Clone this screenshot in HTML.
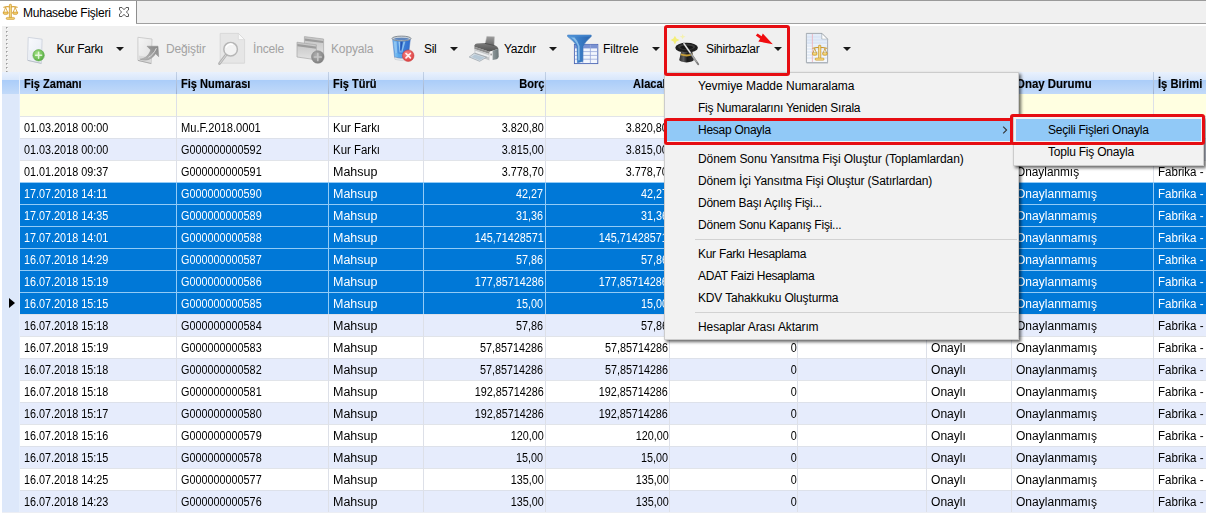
<!DOCTYPE html>
<html lang="tr"><head><meta charset="utf-8"><title>Muhasebe Fişleri</title>
<style>

html,body{margin:0;padding:0}
body{width:1206px;height:515px;overflow:hidden;background:#fff;position:relative;
 font-family:"Liberation Sans",sans-serif;font-size:12px;color:#000;}
div,span,svg{position:absolute;box-sizing:border-box}
span{white-space:pre;line-height:14px;height:14px}
.topline{left:0;top:0;width:1206px;height:1px;background:#9a9a9a}
.tabstrip{left:0;top:1px;width:1206px;height:22px;background:#f0f0f0}
.tabline{left:136px;top:23px;width:1070px;height:1px;background:#a0a0a0}
.tab{left:0;top:1px;width:136px;height:25px;background:#fff}
.tabedge{left:136px;top:1px;width:1px;height:23px;background:#8e8e8e}
.tabtxt{left:23px;top:5.6px;font-size:12px;letter-spacing:-0.23px;color:#000}
.toolbar{left:0;top:26px;width:1206px;height:46px;background:#f0f0f0}
.lstrip{left:0;top:26px;width:2px;height:489px;background:#fff}
.grip{left:6px;top:27px;width:1px;height:46px;
 background:repeating-linear-gradient(to bottom,#9c9c9c 0,#9c9c9c 1px,#c2c2c2 1px,#c2c2c2 2px,transparent 2px,transparent 4px)}
.grip2{left:7px;top:27px;width:1px;height:46px;
 background:repeating-linear-gradient(to bottom,#c2c2c2 0,#c2c2c2 1px,#fff 1px,#fff 2px,transparent 2px,transparent 4px)}
.tb{top:41.6px;font-size:12px;letter-spacing:-0.3px;color:#000}
.tbd{top:41.6px;font-size:12px;letter-spacing:-0.15px;color:#a2a2a2}
.arr{width:0;height:0;border-left:4px solid transparent;border-right:4px solid transparent;border-top:4px solid #1a1a1a;top:47px}
/* grid */
.hdr{left:2px;top:72px;width:1204px;height:22px;
 background:linear-gradient(to bottom,#e9f1fd 0,#d9e7fb 7.5px,#abcdf9 8.5px,#c2daf9 22px)}
.hdr span{top:4.7px;font-weight:bold;font-size:12px;color:#000;-webkit-text-stroke:.15px #000;transform:scaleX(.92);transform-origin:0 50%}
.hdr span.r{transform-origin:100% 50%}
.hv{top:72px;width:1px;height:22px;background:linear-gradient(to bottom,#c4d2e6,#9db2d2)}
.ind{left:2px;top:94px;width:18px;height:418px;background:#dde8fa}
.indh{left:2px;top:72px;width:18px;height:22px;background:linear-gradient(to bottom,#e9f1fd 0,#d9e7fb 7.5px,#abcdf9 8.5px,#c2daf9 22px)}
.frow{left:20px;top:94px;width:1186px;height:22px;background:#ffffe1}
.row{left:20px;width:1186px;height:22px;border-top:1px solid #e1e4e9}
.row.n{background:#fff}
.row.a{background:#e6ecfc;border-top-color:#dde1ea}
.row.s{background:#0078d7;color:#fff;border-top-color:#93cbf6}
.row span{top:3.6px;font-size:12px}
.vl{top:94px;width:1px;height:418px;background:#dde0e8}
.vls{width:1px;background:#93cbf6}
.cur{left:9px;top:298px;width:0;height:0;border-top:5.5px solid transparent;border-bottom:5.5px solid transparent;border-left:6px solid #000}
/* menus */
.menu{left:664px;top:72px;width:355px;height:268px;background:#f2f2f2;border:1px solid #cccccc;
 box-shadow:2px 2px 3px rgba(0,0,0,.6)}
.menu span{left:33px;font-size:12px;letter-spacing:-0.08px;color:#000}
.sep{left:30px;width:322px;height:1px;background:#d2d2d2}
.hl{background:#91c9f7}
.sub{left:1013px;top:116px;width:191px;height:50px;background:#f2f2f2;border:1px solid #cccccc;
 box-shadow:2px 2px 3px rgba(0,0,0,.6)}
.sub span{left:34px;font-size:12px;letter-spacing:-0.22px;color:#000}
.red{border:3px solid #e60d12;border-radius:3px}

</style></head><body>
<div class="tabstrip"></div><div class="tab"></div><div class="tabedge"></div><div class="tabline"></div><div class="topline"></div>
<div class="toolbar"></div><div class="lstrip"></div><div class="grip"></div><div class="grip2"></div>
<svg style="left:2px;top:3px" width="18" height="18" viewBox="2 3 18 18">
<g fill="none" stroke="#d9a53a" stroke-linecap="round">
<path d="M3.8 7.2 Q7 6.2 10.4 7 Q14 6.2 17.2 7.2" stroke-width="1.2"/>
<path d="M5.6 7.5 L3.6 12.4 M5.6 7.5 L7.7 12.4" stroke-width="0.9"/>
<path d="M15.2 7.5 L13.1 12.4 M15.2 7.5 L17.3 12.4" stroke-width="0.9"/>
</g>
<rect x="9.3" y="4.2" width="2.2" height="14" rx="0.8" fill="#e4b548" stroke="#c8922a" stroke-width="0.5"/>
<rect x="10" y="5" width="0.8" height="12.5" fill="#f8e08c"/>
<path d="M3.2 12 H8.2 V13.2 Q8.2 14.6 5.7 14.6 Q3.2 14.6 3.2 13.2 Z" fill="#e3b040" stroke="#c8922a" stroke-width="0.5"/>
<path d="M12.7 12 H17.7 V13.2 Q17.7 14.6 15.2 14.6 Q12.7 14.6 12.7 13.2 Z" fill="#e3b040" stroke="#c8922a" stroke-width="0.5"/>
<rect x="4" y="12.7" width="3.4" height="0.8" fill="#f8e08c"/><rect x="13.5" y="12.7" width="3.4" height="0.8" fill="#f8e08c"/>
<rect x="6.2" y="17.4" width="8.4" height="2" rx="0.9" fill="#e4b548" stroke="#c8922a" stroke-width="0.5"/>
<rect x="7" y="17.9" width="6.8" height="0.7" fill="#f8e08c"/>
</svg>
<span class="tabtxt">Muhasebe Fişleri</span>
<svg style="left:117px;top:5px" width="14" height="14" viewBox="117 5 14 14">
<path d="M119.5 7.5 H122 L124 9.7 L126 7.5 H128.5 V10 L126.3 12 L128.5 14 V16.5 H126 L124 14.3 L122 16.5 H119.5 V14 L121.7 12 L119.5 10 Z"
 fill="#fff" stroke="#5a5a5a" stroke-width="1"/></svg>
<svg style="left:24px;top:33px" width="26" height="34" viewBox="24 33 26 34"><defs><linearGradient id="nd1" x1="0" y1="0" x2="1" y2="1"><stop offset="0" stop-color="#f9fafd"/><stop offset="1" stop-color="#e6ebf3"/></linearGradient>
<radialGradient id="nd2" cx=".4" cy=".35" r=".8"><stop offset="0" stop-color="#a6e488"/><stop offset="1" stop-color="#47a234"/></radialGradient></defs>
<path d="M28.2 37.4 L42.1 39.2 L41.4 63.4 L27.6 60.3 Z" fill="url(#nd1)" stroke="#cdd3dc" stroke-width="0.9"/>
<path d="M28.8 50 L41.3 52 L41 62.6 L28.3 59.8 Z" fill="#e9edf4" opacity=".9"/>
<path d="M27.8 60.4 L41.3 63.4" stroke="#b4bac4" stroke-width="0.8"/>
<circle cx="38.6" cy="55.3" r="5.7" fill="url(#nd2)" stroke="#5aa847" stroke-width="0.6"/>
<path d="M38.6 52.3 V58.3 M35.6 55.3 H41.6" stroke="#f0fbea" stroke-width="1.5" stroke-linecap="round" opacity=".88"/>
</svg>
<span class="tb" style="left:56.5px">Kur Farkı</span><div class="arr" style="left:116px"></div>
<svg style="left:134px;top:33px" width="30" height="34" viewBox="134 33 30 34"><defs><linearGradient id="ed1" x1="0" y1="0" x2="1" y2="1"><stop offset="0" stop-color="#f5f5f5"/><stop offset="1" stop-color="#dfdfdf"/></linearGradient>
<linearGradient id="ed2" x1="0" y1="1" x2="1" y2="0"><stop offset="0" stop-color="#bdbdbd"/><stop offset="1" stop-color="#858585"/></linearGradient></defs>
<path d="M137.9 37.3 L152 39 L151.2 63.5 L137.9 60.4 Z" fill="url(#ed1)" stroke="#cacaca" stroke-width="0.9"/>
<path d="M138.6 55.4 L150.8 57.6 L150.6 62.8 L138.6 60 Z" fill="#dadada"/>
<path d="M138 60.4 L151.2 63.5" stroke="#a8a8a8" stroke-width="0.9"/>
<path d="M147 46.2 L158 46.2 L158.7 56.7 L155.5 53.7 C152.4 58.8 146.8 61.6 140.2 59.2 C145.4 58.4 149 55.2 150.7 49.9 Z" fill="url(#ed2)" stroke="#8e8e8e" stroke-width="0.5"/>
<path d="M156.4 48.2 C154.4 52.6 151.6 55.6 148.4 57.4" fill="none" stroke="#dedede" stroke-width="1"/>
</svg>
<span class="tbd" style="left:166px">Değiştir</span>
<svg style="left:216px;top:31px" width="32" height="36" viewBox="216 31 32 36">
<path d="M220.2 33.4 H238.4 L244.6 39.6 V63.2 H220.2 Z" fill="#e6e6e6" stroke="#d4d4d4" stroke-width="0.8"/>
<path d="M238.4 33.4 V39.6 H244.6 Z" fill="#fafafa" stroke="#d4d4d4" stroke-width="0.6"/>
<path d="M226.2 54.6 L219.4 63.6" stroke="#b2b2b2" stroke-width="2.6" stroke-linecap="round"/>
<path d="M226 55 L220 63" stroke="#dcdcdc" stroke-width="0.9" stroke-linecap="round"/>
<circle cx="230.6" cy="49.2" r="6.8" fill="#f3f3f3" stroke="#b6b6b6" stroke-width="1.5"/>
<path d="M226 47.5 A5 5 0 0 1 233 44.6" stroke="#fff" stroke-width="1.6" fill="none"/>
</svg>
<span class="tbd" style="left:253px">İncele</span>
<svg style="left:294px;top:33px" width="34" height="34" viewBox="294 33 34 34"><defs><linearGradient id="cp1" x1="0" y1="0" x2="0" y2="1"><stop offset="0" stop-color="#c4c4c4"/><stop offset="1" stop-color="#e2e2e2"/></linearGradient>
<radialGradient id="cp2" cx=".4" cy=".35" r=".8"><stop offset="0" stop-color="#b0b0b0"/><stop offset="1" stop-color="#757575"/></radialGradient></defs>
<path d="M304.4 36.6 L323.6 39 L323.6 57 L304.4 54.6 Z" fill="url(#cp1)" stroke="#a8a8a8" stroke-width="0.7"/>
<path d="M304.8 38.6 L323.2 40.9 V43 L304.8 40.8 Z" fill="#9c9c9c"/>
<path d="M297 42.2 L316.4 44.8 L316.4 59.8 L297 57 Z" fill="url(#cp1)" stroke="#a8a8a8" stroke-width="0.7"/>
<path d="M297.4 44 L316 46.6 V48.8 L297.4 46.3 Z" fill="#9c9c9c"/>
<circle cx="317.8" cy="57" r="6.3" fill="url(#cp2)" stroke="#808080" stroke-width="0.5"/>
<path d="M317.8 53.6 V60.4 M314.4 57 H321.2" stroke="#cdcdcd" stroke-width="1.7" stroke-linecap="round" opacity=".85"/>
</svg>
<span class="tbd" style="left:331px">Kopyala</span>
<svg style="left:389px;top:33px" width="28" height="32" viewBox="389 33 28 32"><defs><linearGradient id="tr1" x1="0" y1="0" x2="1" y2="0"><stop offset="0" stop-color="#74b8ee"/><stop offset=".4" stop-color="#4488dc"/><stop offset="1" stop-color="#2f6ccc"/></linearGradient>
<radialGradient id="tr2" cx=".4" cy=".35" r=".8"><stop offset="0" stop-color="#f68686"/><stop offset="1" stop-color="#d83232"/></radialGradient></defs>
<path d="M392.6 38.8 L394.6 57.6 Q401.4 59.6 408.2 57.6 L410.4 38.8 Z" fill="url(#tr1)" stroke="#4a78c0" stroke-width="0.5"/>
<path d="M393.8 41.4 L395.4 56.6 L397.6 57 L396.6 41.4 Z" fill="#a6d6f8" opacity=".65"/>
<path d="M398.4 41.4 L399.6 52.4 L400.6 52.4 L400.2 41.4 Z" fill="#a8d6f6" opacity=".85"/>
<path d="M400.5 41.4 L400.2 50.6 L401.3 50.6 L402.6 41.4 Z" fill="#2555b4"/>
<path d="M403.4 41.4 L401.2 52.6 L402.3 52.6 L405.4 41.4 Z" fill="#9ccff4" opacity=".8"/>
<path d="M395.4 52.8 Q401.4 55 407.6 52.8 L407.2 56.8 Q401.4 58.8 395.8 56.8 Z" fill="#62b4f0" opacity=".7"/>
<path d="M394.6 57.2 Q401.4 59.8 408.2 57.2 L408 59.4 Q401.4 61.6 394.9 59.4 Z" fill="#e4e8ec" stroke="#b0b8c0" stroke-width="0.4"/>
<ellipse cx="401.5" cy="38.5" rx="9.5" ry="2.4" fill="#c9d1d9" stroke="#878f96" stroke-width="1"/>
<ellipse cx="401.5" cy="38.9" rx="7.5" ry="1.2" fill="#5f86bd"/>
<circle cx="408.2" cy="55.7" r="5.8" fill="url(#tr2)" stroke="#c23a3a" stroke-width="0.5"/>
<path d="M406 53.5 L410.4 57.9 M410.4 53.5 L406 57.9" stroke="#fff2f2" stroke-width="1.7" stroke-linecap="round"/>
</svg>
<span class="tb" style="left:424px">Sil</span><div class="arr" style="left:450px"></div>
<svg style="left:466px;top:33px" width="36" height="32" viewBox="466 33 36 32"><defs><linearGradient id="pr1" x1="0" y1="0" x2="0" y2="1"><stop offset="0" stop-color="#9c9c9c"/><stop offset="1" stop-color="#666"/></linearGradient>
<linearGradient id="pr2" x1="0" y1="0" x2="0" y2="1"><stop offset="0" stop-color="#7c7c7c"/><stop offset="1" stop-color="#505050"/></linearGradient>
<linearGradient id="pr3" x1="0" y1="0" x2="1" y2="0"><stop offset="0" stop-color="#8e989a"/><stop offset="1" stop-color="#697577"/></linearGradient></defs>
<path d="M486.8 36.4 L494.4 36.8 L494 45.8 L485 44.4 Z" fill="url(#pr1)" stroke="#b4b4b4" stroke-width="0.5"/>
<path d="M474.6 45.2 Q475 43.8 477 43.5 L485 42.9 L494.5 45 Q498 46.4 498.4 48.8 L489.6 51.8 L474.4 46.8 Z" fill="url(#pr2)"/>
<path d="M485 43.4 L494 45.4" stroke="#4c4c4c" stroke-width="0.9"/>
<path d="M474.4 46.8 L489.6 51.8 L489.6 54 L474.4 49 Z" fill="#8e8e8e"/>
<path d="M474.4 49 L489.6 54 L489.6 60.4 L474.8 55 Z" fill="#c4c6c8"/>
<path d="M475.4 50.8 L488.8 55.2 L488.8 57.2 L475.4 52.8 Z" fill="#eceeef"/>
<path d="M489.6 51.8 L492.6 50.8 L492.6 60 L489.6 60.6 Z" fill="#f5f5f5"/>
<path d="M492.6 50.8 L498.4 48.8 L498.7 56.4 Q498.5 58.6 496.6 59.2 L492.6 60 Z" fill="url(#pr3)"/>
<rect x="490.6" y="53.6" width="1" height="1.8" fill="#666"/>
<path d="M474.2 53.2 L486.6 57.2 L479.6 61.3 L469.2 57 Z" fill="#d5dde4" stroke="#8c969e" stroke-width="0.6"/>
<path d="M474.8 54.6 L484.4 57.6 L479.6 60.2 L471.6 57 Z" fill="#b6c8d6"/>
</svg>
<span class="tb" style="left:504px">Yazdır</span><div class="arr" style="left:549px"></div>
<svg style="left:564px;top:32px" width="38" height="34" viewBox="564 32 38 34"><defs><linearGradient id="fl1" x1="0" y1="0" x2="1" y2="0"><stop offset="0" stop-color="#5a9edc"/><stop offset=".5" stop-color="#3a7cc6"/><stop offset="1" stop-color="#2a64ae"/></linearGradient></defs>
<rect x="574.4" y="44.4" width="23.4" height="19.2" fill="#f2f6fd" stroke="#4a66b4" stroke-width="0.9"/>
<rect x="574.8" y="44.8" width="22.6" height="3.6" fill="#7a92d2"/>
<path d="M574.8 51.6 H597.4 M574.8 55.4 H597.4 M574.8 59.2 H597.4" stroke="#8c9ed4" stroke-width="0.7" fill="none"/>
<path d="M582.8 44.8 V63.2 M590.4 44.8 V63.2" stroke="#98a8da" stroke-width="0.8" fill="none"/>
<path d="M567.6 35 H591.2 V36.6 Q585 42 583 46.4 L582.8 61.4 L577.4 62.8 L577 46.4 Q574.6 41.6 567.6 36.6 Z" fill="url(#fl1)" stroke="#2f6eb8" stroke-width="0.5"/>
<path d="M568 35.3 H590.8 V36.4 H568 Z" fill="#4d8fd4"/>
<path d="M571 37.4 Q576 40.8 577.8 46 L578.2 60.6 L579.8 60.2 L579.6 46 Q578 41 574.6 37.4 Z" fill="#a6d4f4" opacity=".7"/>
</svg>
<span class="tb" style="left:603px;letter-spacing:-.04px">Filtrele</span><div class="arr" style="left:652px"></div>
<svg style="left:668px;top:32px" width="34" height="36" viewBox="668 32 34 36"><defs><linearGradient id="ht1" x1="0" y1="0" x2="1" y2="0"><stop offset="0" stop-color="#2e2e2e"/><stop offset=".3" stop-color="#5c5c5c"/><stop offset=".55" stop-color="#1a1a1a"/><stop offset="1" stop-color="#303030"/></linearGradient>
<filter id="hb" x="-30%" y="-30%" width="160%" height="160%"><feGaussianBlur stdDeviation="0.5"/></filter></defs>
<g filter="url(#hb)" opacity=".8"><path d="M674.9 35.8 L676.4 38.6 L679.6 40.1 L676.4 41.6 L674.9 44.6 L673.4 41.6 L670.6 40.1 L673.4 38.6 Z" fill="#f5ee5c"/>
<path d="M682.7 34 L683.5 36 L685.6 36.6 L683.5 37.4 L682.7 39.4 L681.9 37.4 L679.8 36.6 L681.9 36 Z" fill="#f7f290" opacity=".85"/></g>
<ellipse cx="686.6" cy="47.7" rx="11.3" ry="4.9" fill="#1e1e1e"/>
<ellipse cx="686.6" cy="46.9" rx="8.6" ry="2.9" fill="#3a3a3a"/>
<ellipse cx="686.6" cy="47.4" rx="6.4" ry="1.9" fill="#161616"/>
<path d="M681.2 51.2 Q686.6 53.4 692.2 51.2 L693.8 60 Q693.4 61.8 686.5 62.4 Q679.6 61.8 679.2 60 Z" fill="url(#ht1)"/>
<path d="M681 53.4 Q686.6 55.6 692.5 53.4 L692.8 55.3 Q686.6 57.5 680.7 55.3 Z" fill="#c8a038"/>
<path d="M683.9 43.6 L698.2 64.2" stroke="#7c7c7c" stroke-width="1.9" stroke-linecap="round"/>
<path d="M683.9 43.6 L690.2 52.6" stroke="#ececec" stroke-width="1.1" stroke-linecap="round"/>
<path d="M691.6 54.6 L696.4 61.6" stroke="#a8a8a8" stroke-width="1.1" stroke-linecap="round"/>
</svg>
<span class="tb" style="left:706px">Sihirbazlar</span><div class="arr" style="left:774px"></div>
<svg style="left:803px;top:30px" width="28" height="36" viewBox="803 30 28 36">
<path d="M806.4 33.4 H821.8 L827.6 39.2 V62.6 H806.4 Z" fill="#f4f7fc" stroke="#8e979f" stroke-width="0.8"/>
<path d="M806.9 33.9 H821.6 L827.1 39.4 V44.6 H806.9 Z" fill="#e3ecf8"/>
<path d="M821.8 33.4 V39.2 H827.6 Z" fill="#fff" stroke="#8e979f" stroke-width="0.6"/>
<path d="M807 37 H821 M807 40 H827 M807 43 H827 M807 46 H827 M807 49 H827 M807 52 H827 M807 55 H827 M807 58 H827" stroke="#d2e0f3" stroke-width="0.9"/>
<path d="M812.4 34 V62" stroke="#ecb6c0" stroke-width="0.9"/>
<path d="M806.6 63.3 H828" stroke="#c2c8ce" stroke-width="0.8"/>
<g fill="none" stroke="#c8962e" stroke-linecap="round"><path d="M812.8 48.2 Q816.4 47 819.6 47.8 Q823 47 826.8 48.2" stroke-width="1.1"/>
<path d="M814.7 48.6 L812.8 53.2 M814.7 48.6 L816.6 53.2 M824.9 48.6 L823 53.2 M824.9 48.6 L826.8 53.2" stroke-width="0.8"/></g>
<rect x="818.5" y="45.1" width="2.4" height="13.6" rx="0.8" fill="#ecc354" stroke="#bf8c28" stroke-width="0.5"/>
<rect x="819.3" y="46" width="0.8" height="12" fill="#fbe9a2"/>
<path d="M812.3 52.8 H817.1 L816.7 55 Q814.7 55.8 812.7 55 Z" fill="#ecc354" stroke="#bf8c28" stroke-width="0.5"/>
<path d="M822.5 52.8 H827.3 L826.9 55 Q824.9 55.8 822.9 55 Z" fill="#ecc354" stroke="#bf8c28" stroke-width="0.5"/>
<rect x="813.2" y="53.4" width="3" height="0.8" fill="#fbe9a2"/><rect x="823.4" y="53.4" width="3" height="0.8" fill="#fbe9a2"/>
<rect x="815.1" y="58.1" width="9" height="2.1" rx="0.9" fill="#ecc354" stroke="#bf8c28" stroke-width="0.5"/>
<rect x="816" y="58.7" width="7.2" height="0.7" fill="#fbe9a2"/>
</svg>
<div class="arr" style="left:843px"></div>
<div class="hdr">
<span style="left:22px">Fiş Zamanı</span>
<span style="left:179px">Fiş Numarası</span>
<span style="left:331px">Fiş Türü</span>
<span class="r" style="right:662px">Borç</span>
<span class="r" style="right:537px">Alacak</span>
<span class="r" style="right:410px">Döviz</span>
<span style="left:800px">Açıklama</span>
<span style="left:929px">Durum</span>
<span style="left:1014px;transform:scaleX(.955)">Onay Durumu</span>
<span style="left:1156px;transform:scaleX(.935)">İş Birimi</span>
</div>
<div class="hv" style="left:19px"></div>
<div class="hv" style="left:176px"></div>
<div class="hv" style="left:328px"></div>
<div class="hv" style="left:423px"></div>
<div class="hv" style="left:545px"></div>
<div class="hv" style="left:669px"></div>
<div class="hv" style="left:797px"></div>
<div class="hv" style="left:926px"></div>
<div class="hv" style="left:1011px"></div>
<div class="hv" style="left:1153px"></div>
<div class="indh"></div><div class="ind"></div><div class="frow"></div><div style="left:19px;top:72px;width:1px;height:440px;background:#e6effc"></div>
<div class="row n" style="top:116px">
<span style="left:4.399999999999999px;transform:scaleX(0.902);transform-origin:0 50%">01.03.2018 00:00</span>
<span style="left:161.2px;transform:scaleX(0.927);transform-origin:0 50%">Mu.F.2018.0001</span>
<span style="left:313.2px;transform:scaleX(0.953);transform-origin:0 50%">Kur Farkı</span>
<span style="right:662.60px;transform:scaleX(0.9);transform-origin:100% 50%">3.820,80</span>
<span style="right:537.80px;transform:scaleX(0.9);transform-origin:100% 50%">3.820,80</span>
<span style="right:409.70px;transform:scaleX(0.9);transform-origin:100% 50%">0</span>
<span style="left:911.2px;transform:scaleX(1.006);transform-origin:0 50%">Onaylı</span>
<span style="left:996.4px;transform:scaleX(0.985);transform-origin:0 50%">Onaylanmış</span>
<span style="left:1138.1px;transform:scaleX(0.962);transform-origin:0 50%">Fabrika -</span>
</div>
<div class="row a" style="top:138px">
<span style="left:4.399999999999999px;transform:scaleX(0.902);transform-origin:0 50%">01.03.2018 00:00</span>
<span style="left:161.2px;transform:scaleX(0.902);transform-origin:0 50%">G000000000592</span>
<span style="left:313.2px;transform:scaleX(0.953);transform-origin:0 50%">Kur Farkı</span>
<span style="right:662.60px;transform:scaleX(0.9);transform-origin:100% 50%">3.815,00</span>
<span style="right:537.80px;transform:scaleX(0.9);transform-origin:100% 50%">3.815,00</span>
<span style="right:409.70px;transform:scaleX(0.9);transform-origin:100% 50%">0</span>
<span style="left:911.2px;transform:scaleX(1.006);transform-origin:0 50%">Onaylı</span>
<span style="left:996.4px;transform:scaleX(0.985);transform-origin:0 50%">Onaylanmış</span>
<span style="left:1138.1px;transform:scaleX(0.962);transform-origin:0 50%">Fabrika -</span>
</div>
<div class="row n" style="top:160px">
<span style="left:4.399999999999999px;transform:scaleX(0.902);transform-origin:0 50%">01.01.2018 09:37</span>
<span style="left:161.2px;transform:scaleX(0.902);transform-origin:0 50%">G000000000591</span>
<span style="left:313.2px;transform:scaleX(1.04);transform-origin:0 50%">Mahsup</span>
<span style="right:662.60px;transform:scaleX(0.9);transform-origin:100% 50%">3.778,70</span>
<span style="right:537.80px;transform:scaleX(0.9);transform-origin:100% 50%">3.778,70</span>
<span style="right:409.70px;transform:scaleX(0.9);transform-origin:100% 50%">0</span>
<span style="left:911.2px;transform:scaleX(1.006);transform-origin:0 50%">Onaylı</span>
<span style="left:996.4px;transform:scaleX(0.985);transform-origin:0 50%">Onaylanmış</span>
<span style="left:1138.1px;transform:scaleX(0.962);transform-origin:0 50%">Fabrika -</span>
</div>
<div class="row s" style="top:182px">
<span style="left:4.399999999999999px;transform:scaleX(0.902);transform-origin:0 50%">17.07.2018 14:11</span>
<span style="left:161.2px;transform:scaleX(0.902);transform-origin:0 50%">G000000000590</span>
<span style="left:313.2px;transform:scaleX(1.04);transform-origin:0 50%">Mahsup</span>
<span style="right:662.60px;transform:scaleX(0.9);transform-origin:100% 50%">42,27</span>
<span style="right:537.80px;transform:scaleX(0.9);transform-origin:100% 50%">42,27</span>
<span style="right:409.70px;transform:scaleX(0.9);transform-origin:100% 50%">0</span>
<span style="left:911.2px;transform:scaleX(1.006);transform-origin:0 50%">Onaylı</span>
<span style="left:996.4px;transform:scaleX(1.003);transform-origin:0 50%">Onaylanmamış</span>
<span style="left:1138.1px;transform:scaleX(0.962);transform-origin:0 50%">Fabrika -</span>
<div class="vls" style="left:156px;top:-1px;height:22px"></div>
<div class="vls" style="left:308px;top:-1px;height:22px"></div>
<div class="vls" style="left:403px;top:-1px;height:22px"></div>
<div class="vls" style="left:525px;top:-1px;height:22px"></div>
<div class="vls" style="left:649px;top:-1px;height:22px"></div>
<div class="vls" style="left:777px;top:-1px;height:22px"></div>
<div class="vls" style="left:906px;top:-1px;height:22px"></div>
<div class="vls" style="left:991px;top:-1px;height:22px"></div>
<div class="vls" style="left:1133px;top:-1px;height:22px"></div>
</div>
<div class="row s" style="top:204px">
<span style="left:4.399999999999999px;transform:scaleX(0.902);transform-origin:0 50%">17.07.2018 14:35</span>
<span style="left:161.2px;transform:scaleX(0.902);transform-origin:0 50%">G000000000589</span>
<span style="left:313.2px;transform:scaleX(1.04);transform-origin:0 50%">Mahsup</span>
<span style="right:662.60px;transform:scaleX(0.9);transform-origin:100% 50%">31,36</span>
<span style="right:537.80px;transform:scaleX(0.9);transform-origin:100% 50%">31,36</span>
<span style="right:409.70px;transform:scaleX(0.9);transform-origin:100% 50%">0</span>
<span style="left:911.2px;transform:scaleX(1.006);transform-origin:0 50%">Onaylı</span>
<span style="left:996.4px;transform:scaleX(1.003);transform-origin:0 50%">Onaylanmamış</span>
<span style="left:1138.1px;transform:scaleX(0.962);transform-origin:0 50%">Fabrika -</span>
<div class="vls" style="left:156px;top:-1px;height:22px"></div>
<div class="vls" style="left:308px;top:-1px;height:22px"></div>
<div class="vls" style="left:403px;top:-1px;height:22px"></div>
<div class="vls" style="left:525px;top:-1px;height:22px"></div>
<div class="vls" style="left:649px;top:-1px;height:22px"></div>
<div class="vls" style="left:777px;top:-1px;height:22px"></div>
<div class="vls" style="left:906px;top:-1px;height:22px"></div>
<div class="vls" style="left:991px;top:-1px;height:22px"></div>
<div class="vls" style="left:1133px;top:-1px;height:22px"></div>
</div>
<div class="row s" style="top:226px">
<span style="left:4.399999999999999px;transform:scaleX(0.902);transform-origin:0 50%">17.07.2018 14:01</span>
<span style="left:161.2px;transform:scaleX(0.902);transform-origin:0 50%">G000000000588</span>
<span style="left:313.2px;transform:scaleX(1.04);transform-origin:0 50%">Mahsup</span>
<span style="right:662.60px;transform:scaleX(0.9);transform-origin:100% 50%">145,71428571</span>
<span style="right:537.80px;transform:scaleX(0.9);transform-origin:100% 50%">145,71428571</span>
<span style="right:409.70px;transform:scaleX(0.9);transform-origin:100% 50%">0</span>
<span style="left:911.2px;transform:scaleX(1.006);transform-origin:0 50%">Onaylı</span>
<span style="left:996.4px;transform:scaleX(1.003);transform-origin:0 50%">Onaylanmamış</span>
<span style="left:1138.1px;transform:scaleX(0.962);transform-origin:0 50%">Fabrika -</span>
<div class="vls" style="left:156px;top:-1px;height:22px"></div>
<div class="vls" style="left:308px;top:-1px;height:22px"></div>
<div class="vls" style="left:403px;top:-1px;height:22px"></div>
<div class="vls" style="left:525px;top:-1px;height:22px"></div>
<div class="vls" style="left:649px;top:-1px;height:22px"></div>
<div class="vls" style="left:777px;top:-1px;height:22px"></div>
<div class="vls" style="left:906px;top:-1px;height:22px"></div>
<div class="vls" style="left:991px;top:-1px;height:22px"></div>
<div class="vls" style="left:1133px;top:-1px;height:22px"></div>
</div>
<div class="row s" style="top:248px">
<span style="left:4.399999999999999px;transform:scaleX(0.902);transform-origin:0 50%">16.07.2018 14:29</span>
<span style="left:161.2px;transform:scaleX(0.902);transform-origin:0 50%">G000000000587</span>
<span style="left:313.2px;transform:scaleX(1.04);transform-origin:0 50%">Mahsup</span>
<span style="right:662.60px;transform:scaleX(0.9);transform-origin:100% 50%">57,86</span>
<span style="right:537.80px;transform:scaleX(0.9);transform-origin:100% 50%">57,86</span>
<span style="right:409.70px;transform:scaleX(0.9);transform-origin:100% 50%">0</span>
<span style="left:911.2px;transform:scaleX(1.006);transform-origin:0 50%">Onaylı</span>
<span style="left:996.4px;transform:scaleX(1.003);transform-origin:0 50%">Onaylanmamış</span>
<span style="left:1138.1px;transform:scaleX(0.962);transform-origin:0 50%">Fabrika -</span>
<div class="vls" style="left:156px;top:-1px;height:22px"></div>
<div class="vls" style="left:308px;top:-1px;height:22px"></div>
<div class="vls" style="left:403px;top:-1px;height:22px"></div>
<div class="vls" style="left:525px;top:-1px;height:22px"></div>
<div class="vls" style="left:649px;top:-1px;height:22px"></div>
<div class="vls" style="left:777px;top:-1px;height:22px"></div>
<div class="vls" style="left:906px;top:-1px;height:22px"></div>
<div class="vls" style="left:991px;top:-1px;height:22px"></div>
<div class="vls" style="left:1133px;top:-1px;height:22px"></div>
</div>
<div class="row s" style="top:270px">
<span style="left:4.399999999999999px;transform:scaleX(0.902);transform-origin:0 50%">16.07.2018 15:19</span>
<span style="left:161.2px;transform:scaleX(0.902);transform-origin:0 50%">G000000000586</span>
<span style="left:313.2px;transform:scaleX(1.04);transform-origin:0 50%">Mahsup</span>
<span style="right:662.60px;transform:scaleX(0.9);transform-origin:100% 50%">177,85714286</span>
<span style="right:537.80px;transform:scaleX(0.9);transform-origin:100% 50%">177,85714286</span>
<span style="right:409.70px;transform:scaleX(0.9);transform-origin:100% 50%">0</span>
<span style="left:911.2px;transform:scaleX(1.006);transform-origin:0 50%">Onaylı</span>
<span style="left:996.4px;transform:scaleX(1.003);transform-origin:0 50%">Onaylanmamış</span>
<span style="left:1138.1px;transform:scaleX(0.962);transform-origin:0 50%">Fabrika -</span>
<div class="vls" style="left:156px;top:-1px;height:22px"></div>
<div class="vls" style="left:308px;top:-1px;height:22px"></div>
<div class="vls" style="left:403px;top:-1px;height:22px"></div>
<div class="vls" style="left:525px;top:-1px;height:22px"></div>
<div class="vls" style="left:649px;top:-1px;height:22px"></div>
<div class="vls" style="left:777px;top:-1px;height:22px"></div>
<div class="vls" style="left:906px;top:-1px;height:22px"></div>
<div class="vls" style="left:991px;top:-1px;height:22px"></div>
<div class="vls" style="left:1133px;top:-1px;height:22px"></div>
</div>
<div class="row s" style="top:292px">
<span style="left:4.399999999999999px;transform:scaleX(0.902);transform-origin:0 50%">16.07.2018 15:15</span>
<span style="left:161.2px;transform:scaleX(0.902);transform-origin:0 50%">G000000000585</span>
<span style="left:313.2px;transform:scaleX(1.04);transform-origin:0 50%">Mahsup</span>
<span style="right:662.60px;transform:scaleX(0.9);transform-origin:100% 50%">15,00</span>
<span style="right:537.80px;transform:scaleX(0.9);transform-origin:100% 50%">15,00</span>
<span style="right:409.70px;transform:scaleX(0.9);transform-origin:100% 50%">0</span>
<span style="left:911.2px;transform:scaleX(1.006);transform-origin:0 50%">Onaylı</span>
<span style="left:996.4px;transform:scaleX(1.003);transform-origin:0 50%">Onaylanmamış</span>
<span style="left:1138.1px;transform:scaleX(0.962);transform-origin:0 50%">Fabrika -</span>
<div class="vls" style="left:156px;top:-1px;height:22px"></div>
<div class="vls" style="left:308px;top:-1px;height:22px"></div>
<div class="vls" style="left:403px;top:-1px;height:22px"></div>
<div class="vls" style="left:525px;top:-1px;height:22px"></div>
<div class="vls" style="left:649px;top:-1px;height:22px"></div>
<div class="vls" style="left:777px;top:-1px;height:22px"></div>
<div class="vls" style="left:906px;top:-1px;height:22px"></div>
<div class="vls" style="left:991px;top:-1px;height:22px"></div>
<div class="vls" style="left:1133px;top:-1px;height:22px"></div>
</div>
<div class="row a" style="top:314px">
<span style="left:4.399999999999999px;transform:scaleX(0.902);transform-origin:0 50%">16.07.2018 15:18</span>
<span style="left:161.2px;transform:scaleX(0.902);transform-origin:0 50%">G000000000584</span>
<span style="left:313.2px;transform:scaleX(1.04);transform-origin:0 50%">Mahsup</span>
<span style="right:662.60px;transform:scaleX(0.9);transform-origin:100% 50%">57,86</span>
<span style="right:537.80px;transform:scaleX(0.9);transform-origin:100% 50%">57,86</span>
<span style="right:409.70px;transform:scaleX(0.9);transform-origin:100% 50%">0</span>
<span style="left:911.2px;transform:scaleX(1.006);transform-origin:0 50%">Onaylı</span>
<span style="left:996.4px;transform:scaleX(1.003);transform-origin:0 50%">Onaylanmamış</span>
<span style="left:1138.1px;transform:scaleX(0.962);transform-origin:0 50%">Fabrika -</span>
</div>
<div class="row n" style="top:336px">
<span style="left:4.399999999999999px;transform:scaleX(0.902);transform-origin:0 50%">16.07.2018 15:19</span>
<span style="left:161.2px;transform:scaleX(0.902);transform-origin:0 50%">G000000000583</span>
<span style="left:313.2px;transform:scaleX(1.04);transform-origin:0 50%">Mahsup</span>
<span style="right:662.60px;transform:scaleX(0.9);transform-origin:100% 50%">57,85714286</span>
<span style="right:537.80px;transform:scaleX(0.9);transform-origin:100% 50%">57,85714286</span>
<span style="right:409.70px;transform:scaleX(0.9);transform-origin:100% 50%">0</span>
<span style="left:911.2px;transform:scaleX(1.006);transform-origin:0 50%">Onaylı</span>
<span style="left:996.4px;transform:scaleX(1.003);transform-origin:0 50%">Onaylanmamış</span>
<span style="left:1138.1px;transform:scaleX(0.962);transform-origin:0 50%">Fabrika -</span>
</div>
<div class="row a" style="top:358px">
<span style="left:4.399999999999999px;transform:scaleX(0.902);transform-origin:0 50%">16.07.2018 15:18</span>
<span style="left:161.2px;transform:scaleX(0.902);transform-origin:0 50%">G000000000582</span>
<span style="left:313.2px;transform:scaleX(1.04);transform-origin:0 50%">Mahsup</span>
<span style="right:662.60px;transform:scaleX(0.9);transform-origin:100% 50%">57,85714286</span>
<span style="right:537.80px;transform:scaleX(0.9);transform-origin:100% 50%">57,85714286</span>
<span style="right:409.70px;transform:scaleX(0.9);transform-origin:100% 50%">0</span>
<span style="left:911.2px;transform:scaleX(1.006);transform-origin:0 50%">Onaylı</span>
<span style="left:996.4px;transform:scaleX(1.003);transform-origin:0 50%">Onaylanmamış</span>
<span style="left:1138.1px;transform:scaleX(0.962);transform-origin:0 50%">Fabrika -</span>
</div>
<div class="row n" style="top:380px">
<span style="left:4.399999999999999px;transform:scaleX(0.902);transform-origin:0 50%">16.07.2018 15:18</span>
<span style="left:161.2px;transform:scaleX(0.902);transform-origin:0 50%">G000000000581</span>
<span style="left:313.2px;transform:scaleX(1.04);transform-origin:0 50%">Mahsup</span>
<span style="right:662.60px;transform:scaleX(0.9);transform-origin:100% 50%">192,85714286</span>
<span style="right:537.80px;transform:scaleX(0.9);transform-origin:100% 50%">192,85714286</span>
<span style="right:409.70px;transform:scaleX(0.9);transform-origin:100% 50%">0</span>
<span style="left:911.2px;transform:scaleX(1.006);transform-origin:0 50%">Onaylı</span>
<span style="left:996.4px;transform:scaleX(1.003);transform-origin:0 50%">Onaylanmamış</span>
<span style="left:1138.1px;transform:scaleX(0.962);transform-origin:0 50%">Fabrika -</span>
</div>
<div class="row a" style="top:402px">
<span style="left:4.399999999999999px;transform:scaleX(0.902);transform-origin:0 50%">16.07.2018 15:17</span>
<span style="left:161.2px;transform:scaleX(0.902);transform-origin:0 50%">G000000000580</span>
<span style="left:313.2px;transform:scaleX(1.04);transform-origin:0 50%">Mahsup</span>
<span style="right:662.60px;transform:scaleX(0.9);transform-origin:100% 50%">192,85714286</span>
<span style="right:537.80px;transform:scaleX(0.9);transform-origin:100% 50%">192,85714286</span>
<span style="right:409.70px;transform:scaleX(0.9);transform-origin:100% 50%">0</span>
<span style="left:911.2px;transform:scaleX(1.006);transform-origin:0 50%">Onaylı</span>
<span style="left:996.4px;transform:scaleX(1.003);transform-origin:0 50%">Onaylanmamış</span>
<span style="left:1138.1px;transform:scaleX(0.962);transform-origin:0 50%">Fabrika -</span>
</div>
<div class="row n" style="top:424px">
<span style="left:4.399999999999999px;transform:scaleX(0.902);transform-origin:0 50%">16.07.2018 15:16</span>
<span style="left:161.2px;transform:scaleX(0.902);transform-origin:0 50%">G000000000579</span>
<span style="left:313.2px;transform:scaleX(1.04);transform-origin:0 50%">Mahsup</span>
<span style="right:662.60px;transform:scaleX(0.9);transform-origin:100% 50%">120,00</span>
<span style="right:537.80px;transform:scaleX(0.9);transform-origin:100% 50%">120,00</span>
<span style="right:409.70px;transform:scaleX(0.9);transform-origin:100% 50%">0</span>
<span style="left:911.2px;transform:scaleX(1.006);transform-origin:0 50%">Onaylı</span>
<span style="left:996.4px;transform:scaleX(1.003);transform-origin:0 50%">Onaylanmamış</span>
<span style="left:1138.1px;transform:scaleX(0.962);transform-origin:0 50%">Fabrika -</span>
</div>
<div class="row a" style="top:446px">
<span style="left:4.399999999999999px;transform:scaleX(0.902);transform-origin:0 50%">16.07.2018 15:15</span>
<span style="left:161.2px;transform:scaleX(0.902);transform-origin:0 50%">G000000000578</span>
<span style="left:313.2px;transform:scaleX(1.04);transform-origin:0 50%">Mahsup</span>
<span style="right:662.60px;transform:scaleX(0.9);transform-origin:100% 50%">15,00</span>
<span style="right:537.80px;transform:scaleX(0.9);transform-origin:100% 50%">15,00</span>
<span style="right:409.70px;transform:scaleX(0.9);transform-origin:100% 50%">0</span>
<span style="left:911.2px;transform:scaleX(1.006);transform-origin:0 50%">Onaylı</span>
<span style="left:996.4px;transform:scaleX(1.003);transform-origin:0 50%">Onaylanmamış</span>
<span style="left:1138.1px;transform:scaleX(0.962);transform-origin:0 50%">Fabrika -</span>
</div>
<div class="row n" style="top:468px">
<span style="left:4.399999999999999px;transform:scaleX(0.902);transform-origin:0 50%">16.07.2018 14:25</span>
<span style="left:161.2px;transform:scaleX(0.902);transform-origin:0 50%">G000000000577</span>
<span style="left:313.2px;transform:scaleX(1.04);transform-origin:0 50%">Mahsup</span>
<span style="right:662.60px;transform:scaleX(0.9);transform-origin:100% 50%">135,00</span>
<span style="right:537.80px;transform:scaleX(0.9);transform-origin:100% 50%">135,00</span>
<span style="right:409.70px;transform:scaleX(0.9);transform-origin:100% 50%">0</span>
<span style="left:911.2px;transform:scaleX(1.006);transform-origin:0 50%">Onaylı</span>
<span style="left:996.4px;transform:scaleX(1.003);transform-origin:0 50%">Onaylanmamış</span>
<span style="left:1138.1px;transform:scaleX(0.962);transform-origin:0 50%">Fabrika -</span>
</div>
<div class="row a" style="top:490px">
<span style="left:4.399999999999999px;transform:scaleX(0.902);transform-origin:0 50%">16.07.2018 14:23</span>
<span style="left:161.2px;transform:scaleX(0.902);transform-origin:0 50%">G000000000576</span>
<span style="left:313.2px;transform:scaleX(1.04);transform-origin:0 50%">Mahsup</span>
<span style="right:662.60px;transform:scaleX(0.9);transform-origin:100% 50%">135,00</span>
<span style="right:537.80px;transform:scaleX(0.9);transform-origin:100% 50%">135,00</span>
<span style="right:409.70px;transform:scaleX(0.9);transform-origin:100% 50%">0</span>
<span style="left:911.2px;transform:scaleX(1.006);transform-origin:0 50%">Onaylı</span>
<span style="left:996.4px;transform:scaleX(1.003);transform-origin:0 50%">Onaylanmamış</span>
<span style="left:1138.1px;transform:scaleX(0.962);transform-origin:0 50%">Fabrika -</span>
</div>
<div class="vl" style="left:176px;height:88px"></div>
<div class="vl" style="left:176px;top:314px;height:198px"></div>
<div class="vl" style="left:328px;height:88px"></div>
<div class="vl" style="left:328px;top:314px;height:198px"></div>
<div class="vl" style="left:423px;height:88px"></div>
<div class="vl" style="left:423px;top:314px;height:198px"></div>
<div class="vl" style="left:545px;height:88px"></div>
<div class="vl" style="left:545px;top:314px;height:198px"></div>
<div class="vl" style="left:669px;height:88px"></div>
<div class="vl" style="left:669px;top:314px;height:198px"></div>
<div class="vl" style="left:797px;height:88px"></div>
<div class="vl" style="left:797px;top:314px;height:198px"></div>
<div class="vl" style="left:926px;height:88px"></div>
<div class="vl" style="left:926px;top:314px;height:198px"></div>
<div class="vl" style="left:1011px;height:88px"></div>
<div class="vl" style="left:1011px;top:314px;height:198px"></div>
<div class="vl" style="left:1153px;height:88px"></div>
<div class="vl" style="left:1153px;top:314px;height:198px"></div>
<div class="cur"></div><div style="left:2px;top:512px;width:1204px;height:1px;background:#eceef4"></div>
<div class="menu">
<span style="top:5.5px;letter-spacing:-0.02px">Yevmiye Madde Numaralama</span>
<span style="top:27.5px;letter-spacing:-0.23px">Fiş Numaralarını Yeniden Sırala</span>
<div class="hl" style="left:2px;top:46px;width:349px;height:22px"></div>
<svg style="left:336px;top:52px" width="8" height="10" viewBox="0 0 8 10"><path d="M2.2 1.6 L5.6 5 L2.2 8.4" fill="none" stroke="#333" stroke-width="1.1"/></svg>
<span style="top:49.5px;letter-spacing:-0.26px">Hesap Onayla</span>
<div class="sep" style="top:71px"></div>
<span style="top:78.5px;letter-spacing:-0.1px">Dönem Sonu Yansıtma Fişi Oluştur (Toplamlardan)</span>
<span style="top:100.5px;letter-spacing:-0.15px">Dönem İçi Yansıtma Fişi Oluştur (Satırlardan)</span>
<span style="top:122.5px;letter-spacing:-0.25px">Dönem Başı Açılış Fişi...</span>
<span style="top:144.5px;letter-spacing:-0.23px">Dönem Sonu Kapanış Fişi...</span>
<div class="sep" style="top:166px"></div>
<span style="top:173.5px;letter-spacing:-0.28px">Kur Farkı Hesaplama</span>
<span style="top:195.5px;letter-spacing:-0.37px">ADAT Faizi Hesaplama</span>
<span style="top:217.5px;letter-spacing:-0.15px">KDV Tahakkuku Oluşturma</span>
<div class="sep" style="top:239px"></div>
<span style="top:246.5px;letter-spacing:-0.1px">Hesaplar Arası Aktarım</span>
</div>
<div class="sub">
<div class="hl" style="left:2px;top:2px;width:185px;height:22px"></div>
<span style="top:5.5px">Seçili Fişleri Onayla</span><span style="top:27.5px">Toplu Fiş Onayla</span>
</div>
<div class="red" style="left:664px;top:25px;width:126px;height:51px"></div>
<div class="red" style="left:664px;top:118px;width:349px;height:27px"></div>
<div class="red" style="left:1010px;top:114px;width:195px;height:31px"></div>
<svg style="left:750px;top:28px" width="30" height="22" viewBox="750 28 30 22"><path d="M755.8 35.4 L757.6 33.6 L761.6 36.2 L762.8 33.4 L772.8 44.3 L758.3 41.4 L760.2 38.8 Z" fill="#f00d10"/></svg>
</body></html>
